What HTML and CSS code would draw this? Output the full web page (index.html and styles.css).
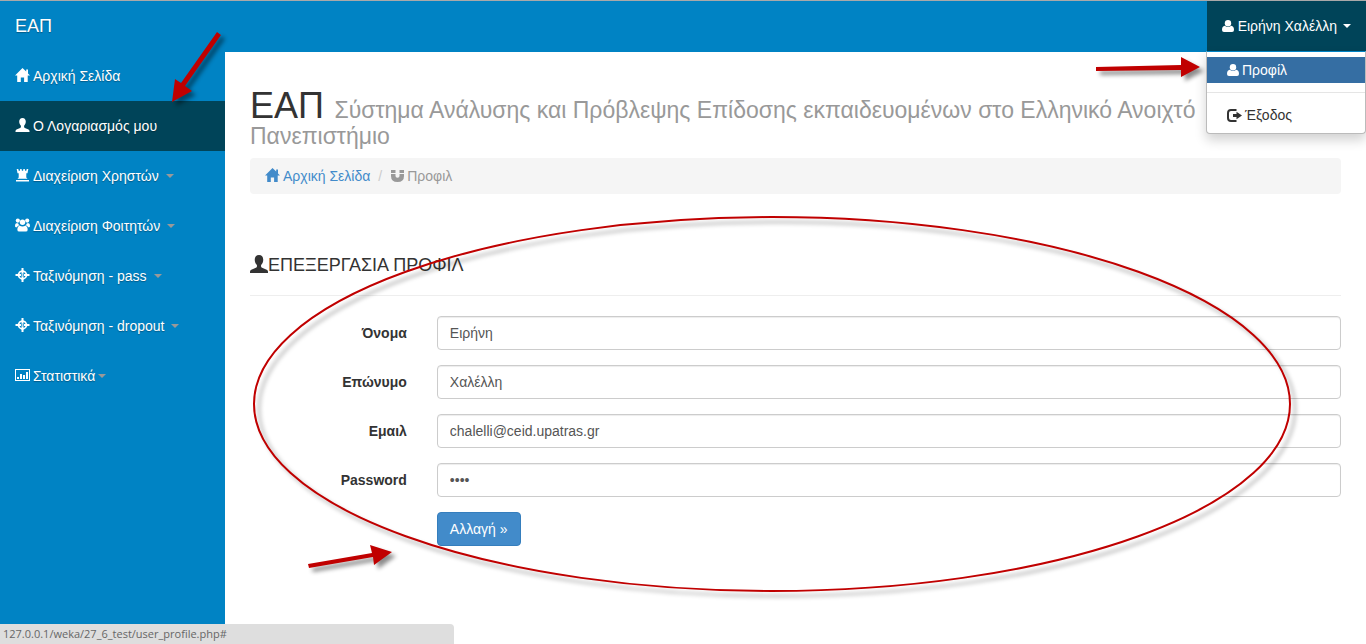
FILE: index.html
```html
<!DOCTYPE html>
<html lang="el">
<head>
<meta charset="utf-8">
<title>ΕΑΠ</title>
<link rel="stylesheet" href="styles.css">
</head>
<body>
<svg class="sprite" aria-hidden="true">
  <symbol id="home" viewBox="0 0 15 14"><path d="M7.500 0 0 7.400h2.200V14h3.600V9.400h3.300V14h3.600V7.400H15l-2-2V1.600h-1.800v2z"/></symbol>
  <symbol id="bust" viewBox="0 0 14 14"><path d="M7 0C4.900 0 3.700 1.500 3.700 3.600c0 1.700.6 3.200 1.700 4.200v1.200c0 .5-.3.7-.8.9L1 11.400Q0 11.900 0 13v1h14v-1q0-1.100-1-1.600L9.400 9.900c-.5-.2-.8-.4-.8-.9V7.800c1.100-1 1.700-2.500 1.700-4.200C10.300 1.500 9.100 0 7 0z"/></symbol>
  <symbol id="tower" viewBox="0 0 14 14"><path d="M1.200 1h1.600l.4 1.800h1.200L4.700 1h1.400l.3 1.800h1.200L7.900 1h1.400l.3 1.800h1.200L11.200 1h1.600L12 5.300h-1.200v4.200l1.200 1.300H2l1.200-1.300V5.300H2zM.500 12h13v1.500H.5z"/></symbol>
  <symbol id="group" viewBox="0 0 16 14"><circle cx="3" cy="2.300" r="2.200"/><circle cx="13" cy="2.300" r="2.200"/><circle cx="8" cy="4" r="2.900"/><path d="M1.400 5h1.800q.8 1.700 2 2.500H4Q2.500 8 2 9.500H.8Q0 9 0 8q0-3 1.400-3zM14.600 5h-1.800q-.8 1.700-2 2.500H12q1.500.5 2 2h1.200Q16 9 16 8q0-3-1.400-3zM5 7.700q3 1.600 6 0 2.500.4 2.500 4.300 0 2-2 2h-7q-2 0-2-2Q2.500 8.100 5 7.700z"/></symbol>
  <symbol id="target" viewBox="0 0 14 14"><path fill-rule="evenodd" d="M6 0h2v2.200Q11 3 11.800 6H14v2h-2.200Q11 11 8 11.800V14H6v-2.200Q3 11 2.200 8H0V6h2.200Q3 3 6 2.200zM6 4Q4.300 4.500 4 6h1.700V8H4q.3 1.500 2 2V8.300H8V10q1.700-.5 2-2H8.300V6H10Q9.700 4.500 8 4v1.700H6z"/><path d="M6.300 6.300h1.400v1.400H6.300z"/></symbol>
  <symbol id="chart" viewBox="0 0 15 12"><path fill-rule="evenodd" d="M0 0h15v12H0zM1 1v10h13V1z"/><path d="M2 8h2v2H2zM5 5h2v5H5zM8 6h2v4H8zM11 3h2v7h-2z"/></symbol>
  <symbol id="user" viewBox="0 0 12 12"><circle cx="6" cy="3.200" r="3.200"/><path d="M2.800 5.700Q6 8.500 9.200 5.700 12 6 12 10q0 2-2 2H2q-2 0-2-2 0-4 2.800-4.300z"/></symbol>
  <symbol id="exit" viewBox="0 0 15 13"><path d="M9.500 0v2H4Q2 2 2 4v5q0 2 2 2h5.500v2H4Q0 13 0 9V4q0-4 4-4zM6 5h3.500V2.800L15 6.500l-5.500 3.700V8H6z"/></symbol>
  <symbol id="magnet" viewBox="0 0 13 12"><path d="M0 0h4.500v3H0zM8.500 0H13v3H8.500zM0 4h4.500v2q0 1.800 2 1.800t2-1.800V4H13v2q0 6-6.500 6T0 6z"/></symbol>
</svg>

<header class="navbar">
  <a class="brand" href="#">ΕΑΠ</a>
  <div class="account">
    <button class="account-toggle" type="button" aria-expanded="true"><svg class="icon-user" aria-hidden="true"><use href="#user"/></svg>Ειρήνη Χαλέλλη<span class="caret"></span></button>
    <div class="menu">
      <a class="menu-item current" href="#"><svg class="icon-user" aria-hidden="true"><use href="#user"/></svg>Προφίλ</a>
      <hr class="divider">
      <a class="menu-item" href="#"><svg class="icon-exit" aria-hidden="true"><use href="#exit"/></svg>Έξοδος</a>
    </div>
  </div>
</header>

<div class="page">
  <nav class="sidebar">
    <a class="nav-link" href="#"><svg class="icon" aria-hidden="true"><use href="#home"/></svg>Αρχική Σελίδα</a>
    <a class="nav-link active" href="#"><svg class="icon" aria-hidden="true"><use href="#bust"/></svg>Ο Λογαριασμός μου</a>
    <a class="nav-link" href="#"><svg class="icon" aria-hidden="true"><use href="#tower"/></svg>Διαχείριση Χρηστών<span class="caret"></span></a>
    <a class="nav-link" href="#"><svg class="icon" aria-hidden="true"><use href="#group"/></svg>Διαχείριση Φοιτητών<span class="caret"></span></a>
    <a class="nav-link" href="#"><svg class="icon" aria-hidden="true"><use href="#target"/></svg>Ταξινόμηση - pass<span class="caret"></span></a>
    <a class="nav-link" href="#"><svg class="icon" aria-hidden="true"><use href="#target"/></svg>Ταξινόμηση - dropout<span class="caret"></span></a>
    <a class="nav-link" href="#"><svg class="icon" aria-hidden="true"><use href="#chart"/></svg>Στατιστικά<span class="caret tight"></span></a>
  </nav>

  <main class="content">
    <h1 class="title"><span class="title-main">ΕΑΠ</span> Σύστημα Ανάλυσης και Πρόβλεψης Επίδοσης εκπαιδευομένων στο Ελληνικό Ανοιχτό Πανεπιστήμιο</h1>
    <ol class="breadcrumb">
      <li><a class="crumb-link" href="#"><svg class="icon" aria-hidden="true"><use href="#home"/></svg>Αρχική Σελίδα</a></li>
      <li class="crumb-current"><svg class="icon-magnet" aria-hidden="true"><use href="#magnet"/></svg>Προφιλ</li>
    </ol>
    <h2 class="section-title"><svg class="icon-large" aria-hidden="true"><use href="#bust"/></svg>ΕΠΕΞΕΡΓΑΣΙΑ ΠΡΟΦΙΛ</h2>
    <form class="form">
      <div class="row"><label class="label" for="first">Όνομα</label><div class="field"><input class="input" id="first" type="text" value="Ειρήνη"></div></div>
      <div class="row"><label class="label" for="last">Επώνυμο</label><div class="field"><input class="input" id="last" type="text" value="Χαλέλλη"></div></div>
      <div class="row"><label class="label" for="email">Εμαιλ</label><div class="field"><input class="input" id="email" type="text" value="chalelli@ceid.upatras.gr"></div></div>
      <div class="row"><label class="label" for="pass">Password</label><div class="field"><input class="input" id="pass" type="password" value="1234"></div></div>
      <div class="row"><span class="label"></span><div class="field"><button class="submit" type="button">Αλλαγή »</button></div></div>
    </form>
  </main>
</div>

<div class="status">127.0.0.1/weka/27_6_test/user_profile.php#</div>

<svg class="marks" viewBox="0 0 1366 644" width="1366" height="644" aria-hidden="true">
  <ellipse class="ring" cx="772" cy="404" rx="518" ry="187"/>
  <g class="arrow">
    <path d="M217 32l4 3-36 51 7 5-20 11 3-23 6 4z"/>
    <path d="M1096 67l85-2v-8l19 10-19 10v-7l-85 1z"/>
    <path d="M308 564l64-11-2-8 22 7-18 13-1-8-64 11z"/>
  </g>
</svg>
</body>
</html>
```

FILE: styles.css
```css
* { box-sizing: border-box; }

body {
  margin: 0;
  min-height: 100vh;
  display: flex;
  flex-direction: column;
  position: relative;
  background: #fff;
  color: #333;
  font-family: "Liberation Sans", Arial, sans-serif;
  font-size: 14px;
  line-height: 20px;
}

a { text-decoration: none; }
svg { fill: currentColor; flex: none; }
.sprite { position: absolute; width: 0; height: 0; }

.navbar {
  display: flex;
  justify-content: space-between;
  height: 51px;
  border-top: 1px solid #a9a9a9;
  background: #0083c4;
}

.brand {
  padding: 15px;
  color: #fff;
  font-size: 18px;
  text-shadow: 0 1px 1px rgba(0, 0, 0, 0.3);
}

.account { position: relative; display: flex; }

.account-toggle {
  display: flex;
  align-items: center;
  gap: 4px;
  padding: 0 15px;
  border: 0;
  background: #004459;
  color: #fff;
  font: inherit;
}

.icon-user { width: 12px; height: 12px; }
.icon-exit { width: 15px; height: 13px; }

.caret {
  margin-left: 2px;
  border: 4px solid transparent;
  border-top-color: currentColor;
  border-bottom: 0;
}

.menu {
  position: absolute;
  z-index: 2;
  top: 100%;
  right: 0;
  width: 160px;
  padding: 5px 0;
  border: 1px solid #bbb;
  border-top-color: #0083c4;
  border-radius: 0 0 4px 4px;
  background: #fff;
  box-shadow: 0 6px 12px rgba(0, 0, 0, 0.18);
}

.menu-item {
  display: flex;
  align-items: center;
  gap: 3px;
  padding: 3px 20px;
  color: #333;
}

.current { background: #356ea3; color: #fff; }

.divider {
  height: 1px;
  margin: 9px 0;
  border: 0;
  background: #e5e5e5;
}

.page { flex: 1; display: flex; margin-bottom: 20px; }

.sidebar { flex: none; width: 225px; background: #0083c4; }

.nav-link {
  display: flex;
  align-items: center;
  gap: 3px;
  padding: 15px;
  color: #fff;
  text-shadow: 0 1px 1px rgba(0, 0, 0, 0.3);
}

.active { background: #004459; }
.icon { width: 15px; height: 14px; margin-bottom: 2px; }
.nav-link .caret { margin-left: 4px; color: #999; }
.nav-link .tight { margin-left: 0; }

.content {
  flex: 1;
  min-width: 0;
  padding: 37px 25px 0;
  border-top: 1px solid #0083c4;
}

.title {
  margin: 0 0 9px;
  color: #999;
  font-size: 23px;
  font-weight: 400;
  line-height: 26px;
}

.title-main {
  margin-right: 4px;
  color: #333;
  font-size: 36px;
  line-height: 34px;
}

.breadcrumb {
  display: flex;
  margin: 0 0 60px;
  padding: 8px 15px;
  border-radius: 4px;
  background: #f5f5f5;
  list-style: none;
}

.crumb-link, .crumb-current {
  display: flex;
  align-items: center;
  gap: 3px;
}

.crumb-link { color: #428bca; }
.crumb-current { color: #999; }
.crumb-current::before { content: "/"; margin: 0 6px 0 8px; color: #ccc; }
.icon-magnet { width: 13px; height: 12px; }

.section-title {
  display: flex;
  align-items: center;
  margin: 0 0 20px;
  padding-bottom: 19px;
  border-bottom: 1px solid #eee;
  font-size: 18px;
  font-weight: 400;
  line-height: 22px;
}

.icon-large { width: 18px; height: 18px; margin-bottom: 2px; }

.form {
  display: flex;
  flex-direction: column;
  gap: 15px;
  margin: 0 -15px;
}

.row { display: grid; grid-template-columns: 1fr 5fr; }
.label { padding: 7px 15px; font-weight: 700; text-align: right; }
.field { padding: 0 15px; }

.input {
  display: block;
  width: 100%;
  height: 34px;
  padding: 6px 12px;
  border: 1px solid #ccc;
  border-radius: 4px;
  background: #fff;
  box-shadow: inset 0 1px 1px rgba(0, 0, 0, 0.075);
  color: #555;
  font: inherit;
}

.submit {
  display: block;
  padding: 6px 12px;
  border: 1px solid #357ebd;
  border-radius: 4px;
  background: #428bca;
  color: #fff;
  font: inherit;
}

.status {
  position: absolute;
  left: 0;
  bottom: 0;
  width: 454px;
  padding: 0 3px;
  border-top-right-radius: 4px;
  background: #dedede;
  color: #666;
  font-family: "Open Sans", sans-serif;
  font-size: 11px;
}

.marks {
  position: absolute;
  z-index: 3;
  top: 0;
  left: 0;
  pointer-events: none;
}

.ring {
  fill: none;
  stroke: #c00000;
  stroke-width: 2px;
  filter: drop-shadow(5px 5px 2px rgba(0, 0, 0, 0.35));
}

.arrow { fill: #c00000; filter: drop-shadow(4px 4px 2px rgba(0, 0, 0, 0.45)); }
```
